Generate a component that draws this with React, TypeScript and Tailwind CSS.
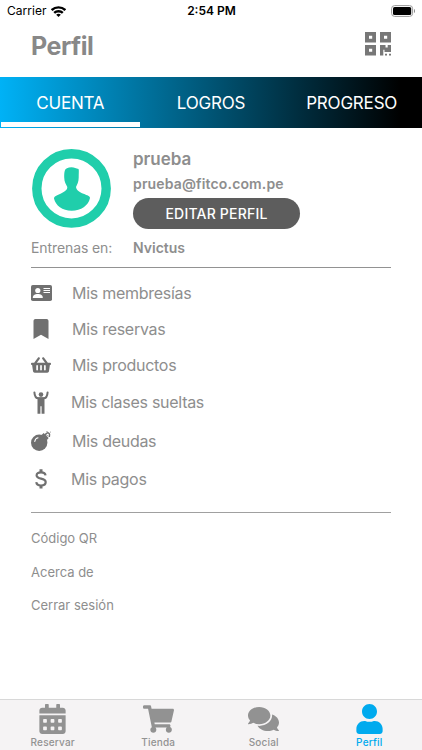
import { FaBookmark, FaCalendarAlt, FaComments, FaShoppingBasket, FaShoppingCart, FaUser } from "react-icons/fa";
import type { ReactNode } from "react";

function WifiIcon() {
  return (
    <svg width="15" height="11" viewBox="0 0 15 11" fill="none" stroke="#000" strokeWidth="2.4">
      <path d="M.7 4.1C4.5.4 10.5.4 14.3 4.1M3.2 6.9c2.4-2.3 6.2-2.3 8.6 0" />
      <path d="M7.5 10.9 5.2 8.7c1.3-1.2 3.3-1.2 4.6 0z" fill="#000" stroke="none" />
    </svg>
  );
}

function BatteryIcon() {
  return (
    <svg width="25" height="12" viewBox="0 0 25 12">
      <rect x=".6" y=".6" width="21" height="10.8" rx="3" fill="#fff" stroke="#999" strokeWidth="1" />
      <rect x="2" y="2" width="18.2" height="8" rx="1.6" />
      <path d="M23 4v4c1.3-.4 1.3-3.6 0-4z" fill="#888" />
    </svg>
  );
}

function QrIcon() {
  return (
    <svg width="26" height="24" viewBox="0 0 26 24" fill="#777" fillRule="evenodd">
      <path d="M0 0h11v10.5H0zM4 3.7v3.1h3.2V3.7z" />
      <path d="M15 0h11v10.5H15zM19 3.7v3.1h3.2V3.7z" />
      <path d="M0 13h11v10.5H0zM4 16.7v3.1h3.2v-3.1z" />
      <path d="M15 13h5.5v2.5h2.2V13H26v7h-6.5v-2.2h-1.2v5.700H15zM20 21.700h2v1.800h-2zM24 21.700h2v1.800h-2z" />
    </svg>
  );
}

function Avatar() {
  return (
    <svg width="80" height="80" viewBox="0 0 80 80" fill="#20ceab">
      <circle cx="40.5" cy="39.4" r="34.700" fill="none" stroke="#20ceab" strokeWidth="9.4" />
      <path d="M33.700 22c.5-2.500 3.300-3.700 6.800-3.700 3 0 4.500 1.200 7 1.700.6.8.2 4 .2 8.500 0 4.500-1.500 7-2.700 9.500.5 3.500 3.500 5 7.500 6.800 4 1.800 6.500 2.200 6.500 4.200C57.500 56.500 50 61.700 40.700 61.700S24.500 56.500 23 49.500c.3-2.500 3.500-3.200 6.500-4.700 4-2 6.800-3.600 6.800-6.800-1.200-2.500-3.100-5-3.100-9.700 0-2.500 0-4.300.5-6.300z" />
    </svg>
  );
}

function CardIcon() {
  return (
    <svg className="shrink-0" width="21" height="16" viewBox="0 0 21 16">
      <rect width="21" height="16" rx="1.8" fill="#707070" />
      <g fill="#fff">
        <circle cx="6.8" cy="5.5" r="2.6" />
        <path d="M1.8 13c0-3 2-4 5-4s5 1 5 4z" />
        <path d="M12.5 3H19v1h-6.500zM12.500 5H19v1h-6.500zM12.500 7H19v1h-6.500z" />
      </g>
    </svg>
  );
}

function PersonIcon() {
  return (
    <svg width="16" height="23" viewBox="0 0 16 23" fill="#707070">
      <circle cx="8" cy="3.6" r="2.3" />
      <path d="M1.400 1.400C1.600 5 3 7.300 5.500 7.300h5c2.500 0 3.900-2.300 4.100-5.900" fill="none" stroke="#707070" strokeWidth="2" strokeLinecap="round" />
      <path d="M4.500 6.500h7v16.300H8.600v-7.500H7.400v7.500H4.500z" />
    </svg>
  );
}

function BombIcon() {
  return (
    <svg width="20" height="20" viewBox="0 0 20 20" fill="#707070">
      <circle cx="8.2" cy="11.8" r="8.2" />
      <path d="m10.500 4 2.200-2 5 5-2 2.300z" />
      <path d="M14.500 4.500c0-3 3.500-3.500 4-1.300.1 1-.2 1.500-.2 2.800" fill="none" stroke="#707070" strokeWidth="1.5" />
      <path d="M16 1V.2M19.400 1.200l.6-.5M16.300 4.300v.8" fill="none" stroke="#707070" />
      <path d="M3.800 10.500c.2-1.900 1.200-3.200 3.200-3.700" fill="none" stroke="#fff" strokeWidth="1.1" strokeLinecap="round" />
    </svg>
  );
}

function DollarIcon() {
  return (
    <svg width="12" height="20" viewBox="0 0 12 20" fill="none" stroke="#707070" strokeWidth="2.2">
      <path d="M6 .3v3M6 16.500v3" strokeWidth="3" />
      <path d="M10.500 6.400C10.300 4.300 8.600 3.400 6 3.400c-2.700 0-4.400 1.100-4.400 3C1.600 10.500 10.700 8.700 10.700 13c0 2.300-2 3.500-4.700 3.500s-4.500-1.300-4.700-3.400" />
    </svg>
  );
}

const MENU: { label: string; icon: ReactNode; row: string; text: string }[] = [
  { label: "Mis membresías", icon: <CardIcon />, row: "h-9", text: "pl-[21px]" },
  { label: "Mis reservas", icon: <FaBookmark className="h-[20px] w-[16px]" />, row: "h-[35px]", text: "pl-[21px]" },
  { label: "Mis productos", icon: <FaShoppingBasket className="h-[18px] w-5" />, row: "h-[37px]", text: "pl-[21px]" },
  { label: "Mis clases sueltas", icon: <PersonIcon />, row: "h-[38px]", text: "pl-5" },
  { label: "Mis deudas", icon: <BombIcon />, row: "h-[39px]", text: "pl-[21px]" },
  { label: "Mis pagos", icon: <DollarIcon />, row: "h-[37px]", text: "pl-5" },
];

const TABS: { label: string; icon: ReactNode; active?: boolean }[] = [
  { label: "Reservar", icon: <FaCalendarAlt className="h-[30px] w-[27px]" /> },
  { label: "Tienda", icon: <FaShoppingCart className="h-[28px] w-[31px]" /> },
  { label: "Social", icon: <FaComments className="h-[28px] w-[31px]" /> },
  { label: "Perfil", icon: <FaUser className="h-[30px] w-[27px]" />, active: true },
];

export default function App() {
  return (
    <div className="flex h-[750px] w-[422px] flex-col overflow-hidden bg-white font-['Inter',sans-serif] text-[#8e8e8e]">
      <div className="grid h-[22px] shrink-0 grid-cols-3 items-center pl-[7px] pr-[6px] text-[12px] text-black">
        <div className="flex items-center gap-1">
          <span className="tracking-[0.05px]">Carrier</span>
          <WifiIcon />
        </div>
        <span className="text-center font-semibold">2:54 PM</span>
        <div className="flex justify-end">
          <BatteryIcon />
        </div>
      </div>

      <header className="flex h-[55px] shrink-0 items-center justify-between pb-[6px] pl-[31px] pr-[31px]">
        <h1 className="pt-px text-[25px] font-bold tracking-[-0.5px] text-[#888]">Perfil</h1>
        <span className="pb-[5px]">
          <QrIcon />
        </span>
      </header>

      <nav className="grid h-[51px] shrink-0 grid-cols-3 bg-linear-to-r/srgb from-[#00b2f6] to-black to-95% text-[17px] tracking-[-0.2px] text-white">
        <div className="relative flex items-center justify-center pt-0.5">
          CUENTA
          <span className="absolute bottom-px left-px h-[5px] w-[139px] bg-white" />
        </div>
        <div className="flex items-center justify-center pt-0.5">LOGROS</div>
        <div className="flex items-center justify-center pt-0.5">PROGRESO</div>
      </nav>

      <main className="flex-1 px-[31px]">
        <section className="border-b border-[#929292] pt-[21px]">
          <div className="flex">
            <div className="w-[102px]">
              <Avatar />
            </div>
            <div>
              <h2 className="text-[17px] font-semibold leading-[21px]">prueba</h2>
              <p className="mt-[5px] text-[14px] font-semibold leading-[18px] tracking-[0.15px]">prueba@fitco.com.pe</p>
              <button className="mt-[5px] flex h-[31px] w-[167px] items-center justify-center rounded-full bg-[#5d5d5d] text-[14px] font-medium tracking-[0.2px] text-white">
                EDITAR PERFIL
              </button>
            </div>
          </div>
          <div className="flex h-[38px] items-center pb-[2px] text-[14px]">
            <span className="w-[102px] tracking-[-0.1px]">Entrenas en:</span>
            <span className="font-semibold">Nvictus</span>
          </div>
        </section>

        <ul className="pt-[7px]">
          {MENU.map(({ label, icon, row, text }) => (
            <li key={label} className={`flex items-center ${row}`}>
              <span className="flex w-5 justify-center text-[#707070]">{icon}</span>
              <span className={`text-[16px] tracking-[-0.28px] ${text}`}>{label}</span>
            </li>
          ))}
        </ul>

        <ul className="mt-[15px] flex flex-col border-t-[1.5px] border-[#a0a0a0] pt-[9px] text-[13px]">
          {["Código QR", "Acerca de", "Cerrar sesión"].map((label) => (
            <li key={label} className="flex h-[33.5px] items-center">
              {label}
            </li>
          ))}
        </ul>
      </main>

      <footer className="grid h-[51px] shrink-0 grid-cols-4 border-t border-[#d8d8d8] bg-[#f5f3f4]">
        {TABS.map(({ label, icon, active }) => (
          <div key={label} className={`flex flex-col items-center pt-1 ${active ? "text-[#00aaee]" : "text-[#929292]"}`}>
            <span className="flex h-[30px] items-center">{icon}</span>
            <span className="pt-px text-[10px] font-medium leading-[15px] tracking-[0.2px]">{label}</span>
          </div>
        ))}
      </footer>
    </div>
  );
}
